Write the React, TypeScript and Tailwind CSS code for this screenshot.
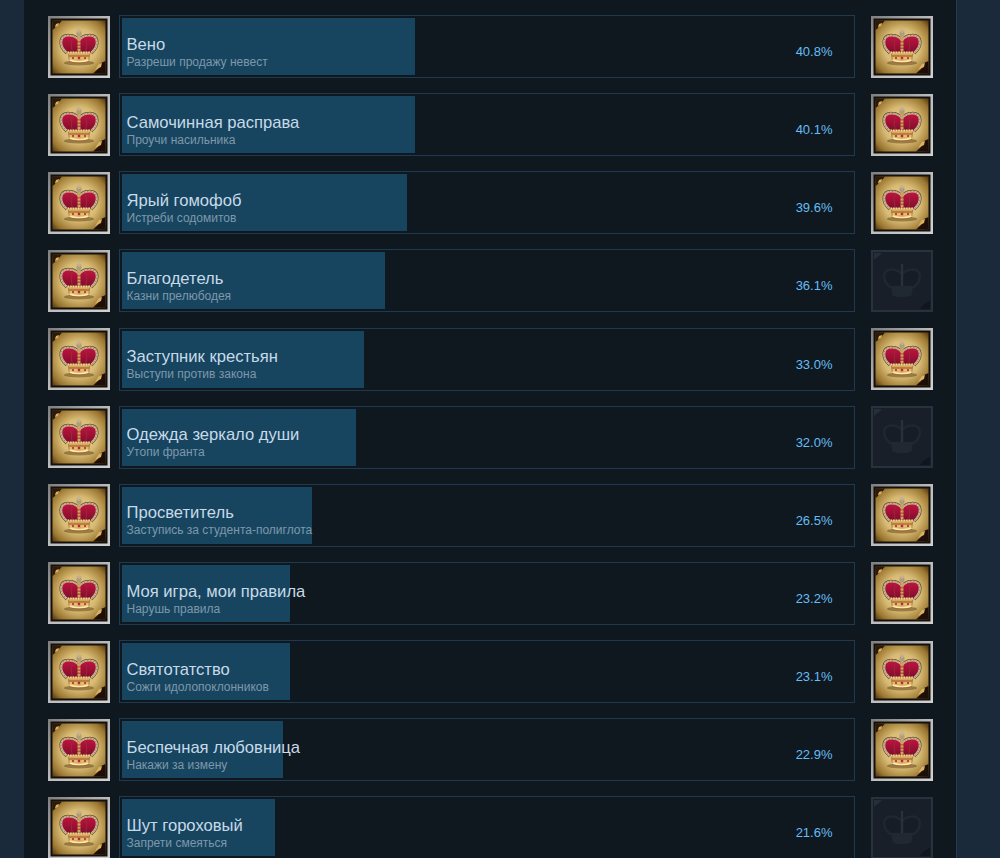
const achievements = [
  { title: "Вено", desc: "Разреши продажу невест", pct: "40.8%", bar: 293, done: true },
  { title: "Самочинная расправа", desc: "Проучи насильника", pct: "40.1%", bar: 293, done: true },
  { title: "Ярый гомофоб", desc: "Истреби содомитов", pct: "39.6%", bar: 285, done: true },
  { title: "Благодетель", desc: "Казни прелюбодея", pct: "36.1%", bar: 263, done: false },
  { title: "Заступник крестьян", desc: "Выступи против закона", pct: "33.0%", bar: 242, done: true },
  { title: "Одежда зеркало души", desc: "Утопи франта", pct: "32.0%", bar: 234, done: false },
  { title: "Просветитель", desc: "Заступись за студента-полиглота", pct: "26.5%", bar: 190, done: true },
  { title: "Моя игра, мои правила", desc: "Нарушь правила", pct: "23.2%", bar: 168, done: true },
  { title: "Святотатство", desc: "Сожги идолопоклонников", pct: "23.1%", bar: 168, done: true },
  { title: "Беспечная любовница", desc: "Накажи за измену", pct: "22.9%", bar: 161, done: true },
  { title: "Шут гороховый", desc: "Запрети смеяться", pct: "21.6%", bar: 153, done: false },
];

const ARCH = "M19 37 C10 29 12 19 21 19.5 C25 19.5 28 21 31 24 C34 21 37 19.5 41 19.5 C50 19 52 29 43 37";

function Crown({ uid }: { uid: string }) {
  return (
    <g>
      <ellipse cx="31" cy="47" rx="15" ry="2.4" fill="#4f3210" opacity="0.45" />
      {/* outer arches, dark edge under the silver */}
      <path d={ARCH} fill="none" stroke="#6e4f28" strokeWidth="3.6" />
      <path d={ARCH} fill={`url(#${uid}-red)`} stroke="#c9b595" strokeWidth="2.2" />
      <path d={ARCH} fill="none" stroke="#8a7350" strokeWidth="0.9" strokeDasharray="1 2" />
      {/* ribs between the red caps */}
      <path d="M25 21 C22.5 27 23 32 25 37 M37 21 C39.5 27 39 32 37 37" fill="none" stroke="#9c2a3c" strokeWidth="1" />
      {/* center spine and cross */}
      <path d="M31 17 V37" stroke="#cfa35a" strokeWidth="3" strokeDasharray="2.4 0.7" />
      <circle cx="31" cy="17.5" r="2.6" fill="#ad9c80" />
      <path d="M28.5 14.5 H33.5 M31 12 V17" stroke="#c8b28c" strokeWidth="1.5" />
      {/* band */}
      <path d="M20 36 H42 L40.5 45.5 C36 47.5 26 47.5 21.5 45.5 Z" fill={`url(#${uid}-gold)`} stroke="#8a5a24" strokeWidth="0.6" />
      <path d="M19.5 36.5 H42.5" stroke="#f0d9a0" strokeWidth="1.8" strokeDasharray="1.6 1" />
      <path d="M21 40 H41" stroke="#96501e" strokeWidth="1" />
      <path d="M21.5 44 C26 46 36 46 40.5 44" fill="none" stroke="#fbe8ae" strokeWidth="1.6" />
      <circle cx="25" cy="42" r="1" fill="#a8222c" />
      <circle cx="37" cy="42" r="1" fill="#a8222c" />
      <path d="M29.8 40.8 H32.2 V43.2 H29.8 Z" fill="#b8283a" />
    </g>
  );
}

function Badge({ done, uid }: { done: boolean; uid: string }) {
  if (!done) {
    return (
      <svg viewBox="0 0 62 62" className="w-[62px] h-[62px] shrink-0">
        <rect x="1" y="1" width="60" height="60" fill="#181f29" stroke="#29313c" strokeWidth="2" />
        <path d="M3 3 H11 L8 6 L4 9 L3 10 Z" fill="#252e39" />
        <path d="M59 59 H49 L53 54 L59 51 Z" fill="#10161d" />
        <path d={`${ARCH} Z`} fill="#161d26" stroke="#20272f" strokeWidth="2.4" />
        <path d="M31 14 V37" stroke="#29323c" strokeWidth="2.4" />
        <path d="M20 36 H42 L40.5 45.5 C36 47.5 26 47.5 21.5 45.5 Z" fill="#202832" />
      </svg>
    );
  }
  return (
    <svg viewBox="0 0 62 62" className="w-[62px] h-[62px] shrink-0">
      <defs>
        <radialGradient id={`${uid}-paper`} cx="50%" cy="50%" r="68%">
          <stop offset="0%" stopColor="#ead79a" />
          <stop offset="50%" stopColor="#d8bb74" />
          <stop offset="85%" stopColor="#9a7630" />
          <stop offset="100%" stopColor="#5f4218" />
        </radialGradient>
        <linearGradient id={`${uid}-red`} x1="0" y1="0" x2="0" y2="1">
          <stop offset="0%" stopColor="#c4133f" />
          <stop offset="100%" stopColor="#7c0e2b" />
        </linearGradient>
        <linearGradient id={`${uid}-gold`} x1="0" y1="0" x2="0" y2="1">
          <stop offset="0%" stopColor="#cf9a4c" />
          <stop offset="60%" stopColor="#e6bf74" />
          <stop offset="100%" stopColor="#b87c34" />
        </linearGradient>
        <linearGradient id={`${uid}-frame`} x1="0" y1="0" x2="1" y2="1">
          <stop offset="0%" stopColor="#808080" />
          <stop offset="50%" stopColor="#bdbdbd" />
          <stop offset="100%" stopColor="#d0d0d0" />
        </linearGradient>
      </defs>
      <rect width="62" height="62" fill="#14100c" />
      <rect x="4.5" y="4.5" width="53" height="53" fill={`url(#${uid}-paper)`} />
      <rect x="1.25" y="1.25" width="59.5" height="59.5" fill="none" stroke={`url(#${uid}-frame)`} strokeWidth="2.5" />
      {/* curled corners */}
      <path d="M4.5 4.5 H14 L11 8 L8 9 L7 12 L4.5 14 Z" fill="#2a1a0c" />
      <path d="M7 11 L8 8 L11 7 L10 10 Z" fill="#e0ad58" />
      <path d="M57.5 57.5 H45 L50 53 L53 47 L57.5 45 Z" fill="#1d0f08" />
      <path d="M47 54 L51 48 L54 47 L53 51 Z" fill="#dcb164" />
      <Crown uid={uid} />
    </svg>
  );
}

export default function App() {
  return (
    <div
      className="h-[858px] overflow-hidden bg-[#1b2a3b] pl-6 pr-[43px]"
      style={{ fontFamily: '"Liberation Sans", Arial, sans-serif' }}
    >
      <div className="h-full border-l border-l-[#0d1a26] border-r border-r-[#2a3a4b] bg-[#10181f] pl-[23px] pr-[23px] pt-[15px] flex flex-col gap-[15.15px]">
        {achievements.map((a, i) => (
          <div key={a.title} className="flex items-center shrink-0 h-[63px]">
            <Badge done uid={`l${i}`} />
            <div className="relative ml-[9px] h-[63px] w-[736px] shrink-0 border border-[#1f3a50] p-[2px]">
              <div className="h-full bg-[#174560]" style={{ width: a.bar }} />
              <div className="absolute left-[6.5px] top-[18.6px] whitespace-nowrap">
                <div className="text-[16.6px] leading-[20px] text-[#c7dae8]">{a.title}</div>
                <div className="text-[12px] leading-[14px] text-[#7e98aa]">{a.desc}</div>
              </div>
              <div className="absolute right-[21.5px] top-[28px] text-[13px] leading-[15px] text-[#66bdf5]">{a.pct}</div>
            </div>
            <div className="ml-4">
              <Badge done={a.done} uid={`r${i}`} />
            </div>
          </div>
        ))}
      </div>
    </div>
  );
}
